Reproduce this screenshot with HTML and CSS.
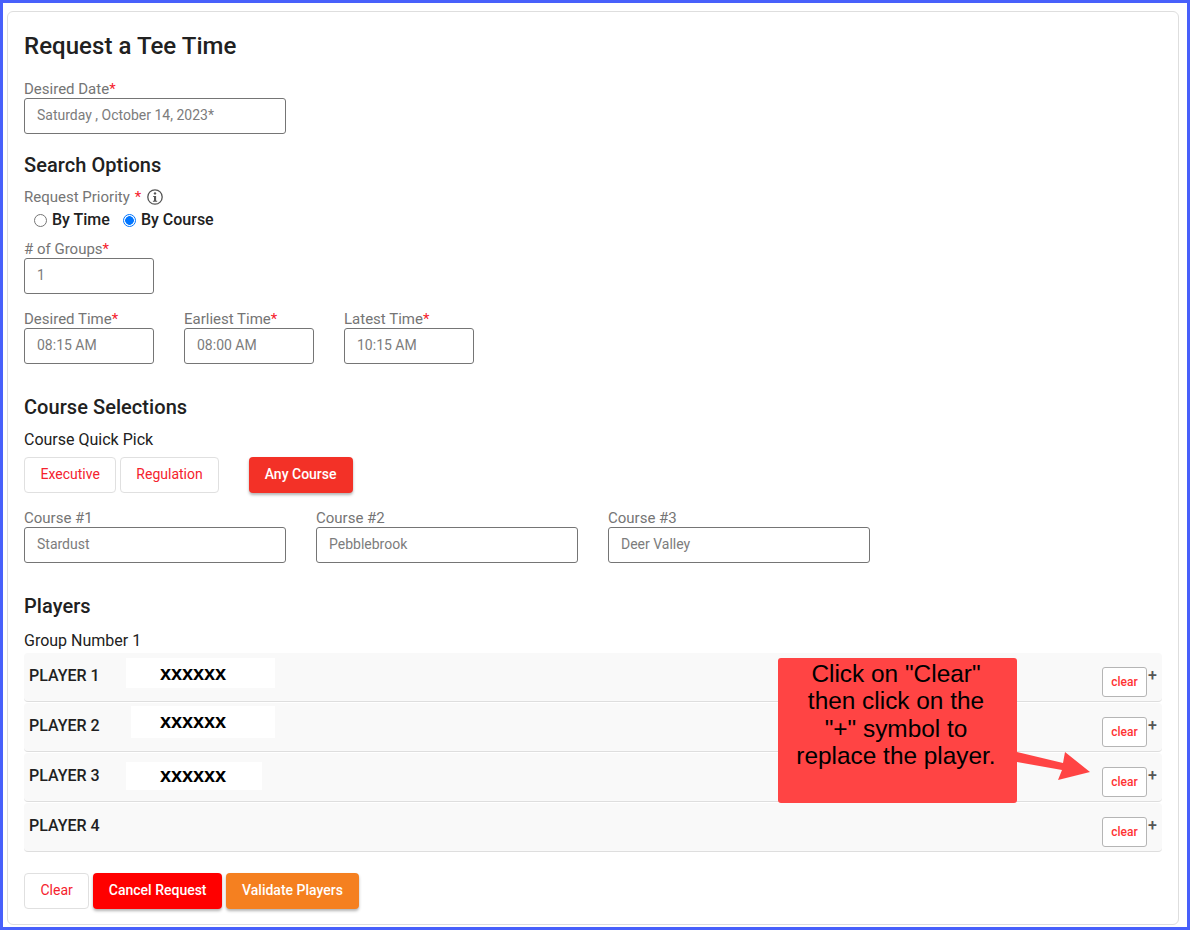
FILE: index.html
```html
<!DOCTYPE html>
<html lang="en">
<head>
<meta charset="utf-8">
<title>Request a Tee Time</title>
<link rel="stylesheet" href="styles.css">
</head>
<body>
<main class="frame">
  <div class="card">
    <h1 class="title">Request a Tee Time</h1>

    <div class="field wide date-field">
      <label class="label">Desired Date<span class="req">*</span></label>
      <div class="input">Saturday , October 14, 2023*</div>
    </div>

    <h2 class="section search-head">Search Options</h2>
    <div class="label priority"><span>Request Priority</span><span class="req">*</span>
      <svg class="info" viewBox="0 0 16 16" width="16" height="16" aria-hidden="true">
        <circle cx="8" cy="8" r="7.2" fill="none" stroke="#555" stroke-width="1.3"/>
        <circle cx="8" cy="4.4" r="1.2" fill="#555"/>
        <path d="M6.2 6.9h2.9v4.8h1.1v1.1H5.9v-1.1h1.1V8H6.2z" fill="#555"/>
      </svg>
    </div>
    <div class="radios">
      <label class="radio"><span class="dot"></span>By Time</label>
      <label class="radio"><span class="dot on"></span>By Course</label>
    </div>

    <div class="field narrow groups-field">
      <label class="label"># of Groups<span class="req">*</span></label>
      <div class="input">1</div>
    </div>

    <div class="times">
      <div class="field narrow">
        <label class="label">Desired Time<span class="req">*</span></label>
        <div class="input">08:15 AM</div>
      </div>
      <div class="field narrow">
        <label class="label">Earliest Time<span class="req">*</span></label>
        <div class="input">08:00 AM</div>
      </div>
      <div class="field narrow">
        <label class="label">Latest Time<span class="req">*</span></label>
        <div class="input">10:15 AM</div>
      </div>
    </div>

    <h2 class="section course-head">Course Selections</h2>
    <div class="subhead quick-head">Course Quick Pick</div>
    <div class="quick">
      <button class="btn outline roomy">Executive</button>
      <button class="btn outline">Regulation</button>
      <button class="btn any">Any Course</button>
    </div>

    <div class="courses">
      <div class="field wide">
        <label class="label">Course #1</label>
        <div class="input">Stardust</div>
      </div>
      <div class="field wide">
        <label class="label">Course #2</label>
        <div class="input">Pebblebrook</div>
      </div>
      <div class="field wide">
        <label class="label">Course #3</label>
        <div class="input">Deer Valley</div>
      </div>
    </div>

    <h2 class="section players-head">Players</h2>
    <div class="subhead group-head">Group Number 1</div>

    <div class="players">
      <div class="player">
        <span class="pname">PLAYER 1</span>
        <span class="mask mask1">xxxxxx</span>
        <span class="actions"><button class="clear">clear</button><span class="plus">+</span></span>
      </div>
      <div class="player">
        <span class="pname">PLAYER 2</span>
        <span class="mask mask2">xxxxxx</span>
        <span class="actions"><button class="clear">clear</button><span class="plus">+</span></span>
      </div>
      <div class="player">
        <span class="pname">PLAYER 3</span>
        <span class="mask mask3">xxxxxx</span>
        <span class="actions"><button class="clear">clear</button><span class="plus">+</span></span>
      </div>
      <div class="player">
        <span class="pname">PLAYER 4</span>
        <span class="actions"><button class="clear">clear</button><span class="plus">+</span></span>
      </div>

      <div class="callout">Click on "Clear"<br>then click on the<br>"+" symbol to<br>replace the player.</div>
      <svg class="arrow" viewBox="0 0 76 34" width="76" height="34" aria-hidden="true">
        <path d="M0 1 L46 12 L48 1 L73 21 L41 29 L45 19 L0 11 Z" fill="#ff4444"/>
      </svg>
    </div>

    <div class="footer">
      <button class="btn outline roomy">Clear</button>
      <button class="btn cancel">Cancel Request</button>
      <button class="btn validate">Validate Players</button>
    </div>
  </div>
</main>
</body>
</html>
```
FILE: styles.css
```css
* { box-sizing: border-box; }
html, body { margin: 0; height: 100%; }
body {
  font-family: Roboto, "Liberation Sans", sans-serif;
  color: #212121;
  background: #fff;
}
.frame {
  height: 930px;
  border: 3px solid #4860fb;
  padding: 8px 8px 2px 4px;
  background: #fff;
}
.card {
  height: 100%;
  border: 1px solid #dedede;
  border-radius: 6px;
  padding: 20px 16px 0;
  background: #fff;
}
.title {
  margin: 0;
  font-size: 24px;
  line-height: 28px;
  font-weight: 500;
  letter-spacing: .05px;
  color: #212121;
}
.section {
  margin: 0;
  font-size: 20px;
  line-height: 24px;
  font-weight: 500;
  letter-spacing: .06px;
  color: #212121;
}
.subhead {
  font-size: 16px;
  line-height: 20px;
  color: #212121;
}
.label {
  display: block;
  font-size: 15px;
  line-height: 16px;
  color: #757575;
  white-space: nowrap;
}
.req { color: #f5222d; }
.field.wide { width: 262px; }
.field.narrow { width: 130px; }
.input {
  height: 36px;
  margin-top: 1px;
  padding: 0 12px;
  border: 1px solid #757575;
  border-radius: 3px;
  font-size: 14px;
  line-height: 33px;
  color: #7c7c7c;
  white-space: nowrap;
  background: #fff;
}
.date-field { margin-top: 21px; }
.search-head { margin-top: 19px; }
.priority {
  display: flex;
  align-items: center;
  gap: 5px;
  margin-top: 11px;
  height: 18px;
}
.info { margin-left: 1px; }
.radios {
  display: flex;
  gap: 13px;
  margin-left: 10px;
  margin-top: 4px;
}
.radio {
  display: flex;
  align-items: center;
  gap: 5px;
  font-size: 16px;
  line-height: 20px;
  font-weight: 500;
  color: #212121;
}
.dot {
  width: 13px;
  height: 13px;
  border: 1px solid #767676;
  border-radius: 50%;
  background: #fff;
}
.dot.on {
  border: 1.5px solid #0075ff;
  background: radial-gradient(circle, #0075ff 0 4px, #fff 4.6px);
}
.groups-field { margin-top: 11px; }
.times {
  display: flex;
  gap: 30px;
  margin-top: 17px;
}
.course-head { margin-top: 31px; }
.quick-head { margin-top: 11px; }
.quick {
  display: flex;
  margin-top: 7px;
}
.btn {
  height: 36px;
  padding: 0 15px 2px;
  border: 1px solid transparent;
  border-radius: 4px;
  font-family: inherit;
  font-size: 14px;
  font-weight: 500;
  white-space: nowrap;
}
.btn.outline {
  border-color: #e0e0e0;
  background: #fff;
  color: #f5222d;
  font-weight: 400;
  margin-right: 4px;
}
.btn.outline.roomy { padding: 0 15.5px 2px; }
.btn.any {
  margin-left: 26px;
  background: #f33127;
  color: #fff;
  box-shadow: 0 2px 3px rgba(0,0,0,.3);
}
.courses {
  display: flex;
  gap: 30px;
  margin-top: 17px;
}
.players-head { margin-top: 31px; }
.group-head { margin-top: 13px; }
.players {
  position: relative;
  margin-top: 2px;
}
.player {
  position: relative;
  display: flex;
  align-items: flex-start;
  height: 49px;
  margin-bottom: 1px;
  padding-left: 5px;
  background: #f9f9f9;
  border-bottom: 1px solid #dedede;
  border-radius: 4px;
}
.pname {
  width: 97px;
  margin-top: 14px;
  font-size: 16px;
  line-height: 18px;
  font-weight: 500;
  color: #212121;
}
.mask {
  display: block;
  height: 30px;
  background: #fff;
  font-family: "Liberation Sans", sans-serif;
  font-size: 20px;
  font-weight: 700;
  line-height: 30px;
  letter-spacing: -.1px;
  color: #000;
}
.mask1 { width: 149px; margin-top: 5px; padding-left: 34px; }
.mask2 { width: 144px; margin-top: 3px; margin-left: 5px; padding-left: 29px; height: 32px; }
.mask3 { width: 136px; margin-top: 9px; padding-left: 34px; height: 28px; line-height: 26px; }
.actions {
  display: flex;
  align-items: flex-start;
  margin-left: auto;
  margin-top: 14px;
}
.clear {
  width: 45px;
  height: 30px;
  padding: 0;
  border: 1px solid #b5b5b5;
  border-radius: 3px;
  background: #fff;
  color: #f33;
  font-family: inherit;
  font-size: 12px;
  font-weight: 500;
}
.plus {
  width: 15px;
  margin-top: -1px;
  padding-left: 1px;
  font-size: 16px;
  line-height: 20px;
  font-weight: 500;
  color: #555;
}
.callout {
  position: absolute;
  left: 754px;
  top: 5px;
  width: 239px;
  height: 145px;
  padding: 2px 3px 0 0;
  border-radius: 3px;
  background: #ff4444;
  color: #000;
  font-family: "Liberation Sans", sans-serif;
  font-size: 24.4px;
  line-height: 27.3px;
  text-align: center;
}
.arrow {
  position: absolute;
  left: 993px;
  top: 98px;
}
.footer {
  display: flex;
  align-items: center;
  margin-top: 21px;
}
.btn.cancel {
  padding: 0 14.5px 2px;
  background: #ff0000;
  color: #fff;
  margin-right: 4px;
  box-shadow: 0 2px 3px rgba(0,0,0,.3);
}
.btn.validate {
  background: #f58020;
  color: #fff;
  box-shadow: 0 2px 3px rgba(0,0,0,.3);
}
```
